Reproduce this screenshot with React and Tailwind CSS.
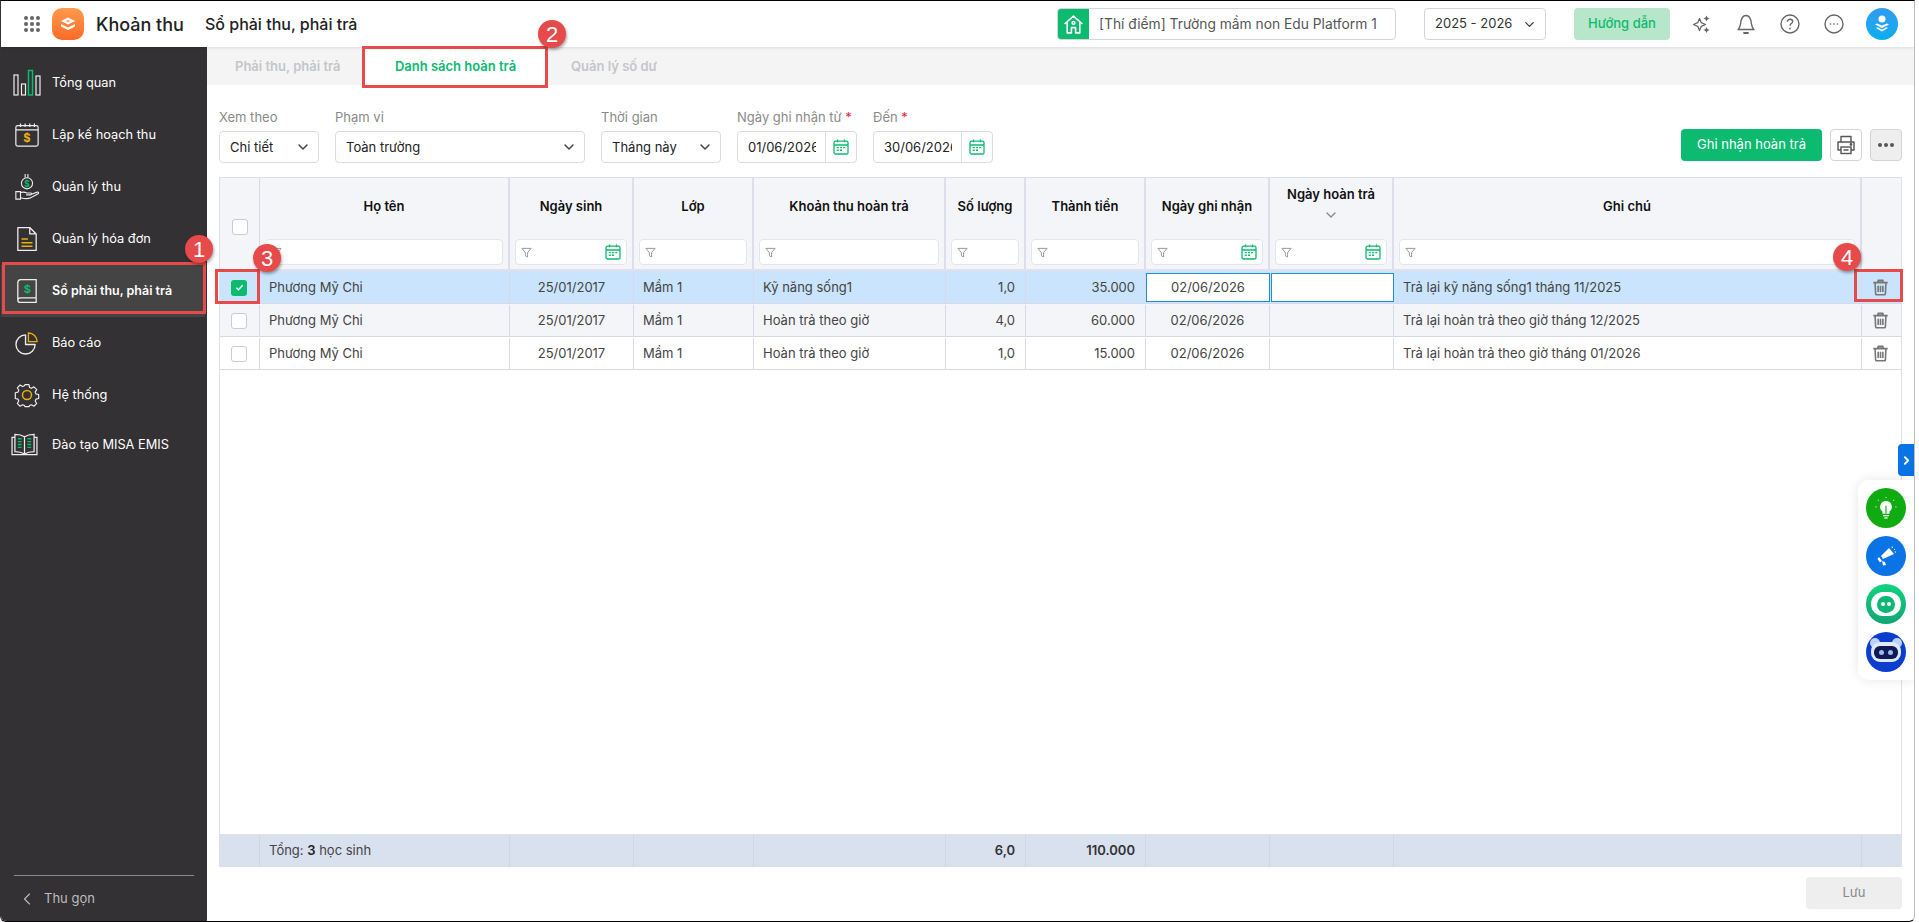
// App.jsx
import { ChevronDown, ChevronLeft, ChevronRight } from "lucide-react";

const GREEN = "#0cbb6f";
const GOLD = "#e9b10d";

/* ===========================
   SMALL ICONS
=========================== */

function Calendar() {
  return (
    <svg viewBox="0 0 16 16" className="w-[16px] h-[16px]" fill="none" stroke={GREEN} strokeWidth="1.3">
      <rect x="1" y="2.2" width="14" height="12.8" rx="1.6" />
      <path d="M1 6h14M4.500 .6v2.600M11.500 .6v2.600" />
      <path d="M3.800 8.600h2M7 8.600h2M10.200 8.600h2M3.800 11.200h2M7 11.200h2" strokeWidth="1.400" />
    </svg>
  );
}

function Funnel() {
  return (
    <svg viewBox="0 0 12 12" className="w-[11px] h-[11px] shrink-0" fill="none" stroke="#8b8f98" strokeWidth="1">
      <path d="M1 1.500h10L7.200 6.200v4.600L4.800 9.600V6.200z" strokeLinejoin="round" />
    </svg>
  );
}

function Trash() {
  return (
    <svg viewBox="0 0 16 16" className="w-[17px] h-[17px]" fill="none" stroke="#777" strokeWidth="1.500">
      <path d="M1.200 3.400h13.600M5.400 3.200l.6-1.800h4l.6 1.800" strokeWidth="1.700" />
      <path d="M2.900 3.600l.5 10.200c0 .6.500 1 1 1h7.200c.5 0 1-.4 1-1l.5-10.200" />
      <path d="M5.800 6.400v5.800M8 6.400v5.800M10.200 6.400v5.800" />
    </svg>
  );
}

function Checkbox({ checked }) {
  if (checked) {
    return (
      <div className="w-4 h-4 rounded-[3px] bg-[#0cbb6f] flex items-center justify-center">
        <svg viewBox="0 0 10 10" className="w-[9px] h-[9px]" fill="none" stroke="#fff" strokeWidth="1.600">
          <path d="M1.500 5.200l2.400 2.300 4.600-5" />
        </svg>
      </div>
    );
  }
  return <div className="w-4 h-4 rounded-[3px] bg-white border border-[#c9ccd3]" />;
}

function Badge({ n, className }) {
  return (
    <div
      className={`absolute z-20 w-[28px] h-[28px] rounded-full bg-[#e64a4a] text-white text-[22px] flex items-center justify-center shadow-[1px_2px_3px_rgba(0,0,0,0.35)] font-['Liberation_Sans',sans-serif] ${className}`}
    >
      {n}
    </div>
  );
}

/* ===========================
   SIDEBAR ICONS
=========================== */

const sideIcons = {
  overview: (
    <svg viewBox="0 0 28 28" className="w-[28px] h-[28px]" fill="none" stroke="#eee" strokeWidth="1.200">
      <rect x="1" y="6" width="4" height="20" />
      <rect x="8.500" y="15" width="4" height="11" />
      <rect x="15.500" y="1.500" width="4" height="24.500" stroke={GREEN} strokeWidth="1.500" />
      <rect x="23" y="7" width="4" height="19" />
    </svg>
  ),
  plan: (
    <svg viewBox="0 0 28 28" className="w-[26px] h-[26px]" fill="none" stroke="#eee" strokeWidth="1.300">
      <rect x="2" y="4" width="24" height="22" rx="2" />
      <path d="M2 8.500h24M7 1.500v4M12 1.500v4M17 1.500v4M22 1.500v4" />
      <text x="14" y="22" textAnchor="middle" fontSize="12" fontWeight="700" fill={GOLD} stroke="none" fontFamily="Inter, sans-serif">$</text>
    </svg>
  ),
  collect: (
    <svg viewBox="0 0 28 30" className="w-[26px] h-[28px]" fill="none" stroke="#eee" strokeWidth="1.200">
      <path d="M12 1v4M15 1v4" />
      <circle cx="14" cy="11" r="6" />
      <text x="14" y="14.500" textAnchor="middle" fontSize="9" fontWeight="700" fill={GREEN} stroke="none" fontFamily="Inter, sans-serif">$</text>
      <path d="M2 20h5v8H2zM7 21c3-1 5-.5 7 .5h4c1.400 0 1.400 2-.4 2H13M18 23l7-2.500c1.400-.3 2 1 1 1.800L17 27c-3 1-6 .5-10-.5" />
    </svg>
  ),
  invoice: (
    <svg viewBox="0 0 24 28" className="w-[22px] h-[26px]" fill="none" stroke="#eee" strokeWidth="1.400">
      <path d="M2 1.500h13l7 7v18H2zM15 1.500v7h7" strokeLinejoin="round" />
      <path d="M6 14h7M6 18h12M6 22h12" stroke={GOLD} strokeWidth="1.600" />
    </svg>
  ),
  book: (
    <svg viewBox="0 0 24 28" className="w-[22px] h-[26px]" fill="none" stroke="#eee" strokeWidth="1.400">
      <path d="M5 1.500h17v20H5c-2 0-3 1-3 2.500V5c0-2 1-3.500 3-3.500zM2 24c0 1.500 1 2.500 3 2.500h17v-5" />
      <text x="12.500" y="16" textAnchor="middle" fontSize="12" fontWeight="700" fill={GREEN} stroke="none" fontFamily="Inter, sans-serif">$</text>
    </svg>
  ),
  report: (
    <svg viewBox="0 0 24 24" className="w-[23px] h-[23px]" fill="none" stroke="#eee" strokeWidth="1.400">
      <path d="M11 3a10 10 0 1 0 10 10H11z" strokeLinejoin="round" />
      <path d="M14 1a9 9 0 0 1 9 9h-9z" stroke={GOLD} fill="none" />
    </svg>
  ),
  system: (
    <svg viewBox="0 0 26 26" className="w-[26px] h-[26px]" fill="none" stroke="#eee" strokeWidth="1.300">
      <path
        d="M10.800 1.500h4.400l.7 3.200 2 .9 2.800-1.700 3.100 3.100-1.700 2.800.9 2 3 .7v4.400l-3 .7-.9 2 1.700 2.800-3.100 3.100-2.800-1.700-2 .9-.7 1.300h-4.400l-.7-1.300-2-.9-2.800 1.700-3.100-3.100 1.700-2.800-.9-2-3-.7V10.500l3-.7.9-2-1.700-2.800 3.100-3.100 2.800 1.700 2-.9z"
        strokeLinejoin="round"
        transform="translate(1.300 1.300) scale(.9)"
      />
      <circle cx="13" cy="13" r="4.500" stroke={GOLD} strokeWidth="1.500" />
    </svg>
  ),
  training: (
    <svg viewBox="0 0 28 24" className="w-[27px] h-[23px] mr-[4px]" fill="none" stroke="#eee" strokeWidth="1.300">
      <path d="M14 4C11 2 8 1.500 4 1.500v18c4 0 7 .5 10 2.500 3-2 6-2.500 10-2.500v-18c-4 0-7 .5-10 2.500zM14 4v18" />
      <path d="M4 4.500H1v18h26v-18h-3" />
      <path d="M7 6h4M7 9h4M7 12h4M7 15h4M17 6h4M17 9h4M17 12h4M17 15h4" stroke={GREEN} strokeWidth="1.500" />
    </svg>
  ),
};

const menu = [
  { key: "overview", label: "Tổng quan" },
  { key: "plan", label: "Lập kế hoạch thu" },
  { key: "collect", label: "Quản lý thu" },
  { key: "invoice", label: "Quản lý hóa đơn" },
  { key: "book", label: "Sổ phải thu, phải trả", active: true },
  { key: "report", label: "Báo cáo" },
  { key: "system", label: "Hệ thống" },
  { key: "training", label: "Đào tạo MISA EMIS", short: true },
];

/* ===========================
   TABLE DATA
=========================== */

const GRID =
  "grid grid-cols-[40px_250px_124px_120px_192px_80px_120px_124px_124px_468px_40px]";

const columns = [
  { title: "Họ tên" },
  { title: "Ngày sinh", date: true },
  { title: "Lớp" },
  { title: "Khoản thu hoàn trả" },
  { title: "Số lượng" },
  { title: "Thành tiền" },
  { title: "Ngày ghi nhận", date: true },
  { title: "Ngày hoàn trả", date: true, sort: true },
  { title: "Ghi chú" },
];

const rows = [
  { item: "Kỹ năng sống1", qty: "1,0", amount: "35.000", note: "Trả lại kỹ năng sống1 tháng 11/2025", bg: "bg-[#c9e4fc]", selected: true },
  { item: "Hoàn trả theo giờ", qty: "4,0", amount: "60.000", note: "Trả lại hoàn trả theo giờ tháng 12/2025", bg: "bg-[#f4f5f9]" },
  { item: "Hoàn trả theo giờ", qty: "1,0", amount: "15.000", note: "Trả lại hoàn trả theo giờ tháng 01/2026", bg: "bg-white" },
];

function Select({ label, value, width }) {
  return (
    <div className={width}>
      <div className="text-[13px] leading-[18px] text-[#8a8a8a] -mt-[1px] mb-[5px]">{label}</div>
      <div className="h-8 rounded-[4px] border border-[#dcdcdf] bg-white flex items-center justify-between pl-[10px] pr-[7px] text-[13px] text-[#222]">
        <span className="pt-[1px]">{value}</span>
        <ChevronDown size={16} color="#444" strokeWidth={2.2} />
      </div>
    </div>
  );
}

function DateInput({ label, value }) {
  return (
    <div className="w-[120px]">
      <div className="text-[13px] leading-[18px] text-[#8a8a8a] -mt-[1px] mb-[5px]">
        {label} <span className="text-[#f01f3a]">*</span>
      </div>
      <div className="h-8 rounded-[4px] border border-[#dcdcdf] bg-white flex items-center text-[13px] text-[#222]">
        <div className="w-[68px] ml-[10px] overflow-hidden whitespace-nowrap pt-[1px]">{value}</div>
        <div className="ml-auto w-[31px] h-full border-l border-[#dcdcdf] flex items-center justify-center">
          <Calendar />
        </div>
      </div>
    </div>
  );
}

/* ===========================
   MAIN
=========================== */

export default function App() {
  return (
    <div className="w-[1915px] h-[922px] bg-white border-t border-b border-l border-r border-t-black border-b-black border-l-[#333] border-r-[#bbb] rounded-br-[6px] rounded-bl-[6px] overflow-hidden flex flex-col relative font-['Inter',sans-serif]">
      {/* HEADER */}
      <header className="h-[46px] shrink-0 flex items-center bg-white relative z-10 shadow-[0_1px_3px_rgba(0,0,0,0.1)]">
        <div className="ml-[23px] w-[16px] grid grid-cols-3 gap-[2px]">
          {[...Array(9)].map((_, i) => (
            <span key={i} className="w-[4px] h-[4px] rounded-full bg-[#666]" />
          ))}
        </div>
        <div className="ml-[12px] w-[32px] h-[32px] rounded-[10px] bg-gradient-to-b from-[#ff9a4d] to-[#fb6a26] flex items-center justify-center">
          <svg viewBox="0 0 16 16" className="w-[16px] h-[16px]">
            <path d="M8 1.500l7 3.500-7 3.500L1 5z" fill="#fff" />
            <path d="M1 8l7 3.500L15 8v2.500L8 14l-7-3.500z" fill="#fff" />
            <path d="M5.500 5l2.500-1 2.500 1-2.500 1z" fill="#fb9a66" />
          </svg>
        </div>
        <div className="ml-[12px] w-[109px] text-[18px] font-medium text-[#222] whitespace-nowrap">Khoản thu</div>
        <div className="text-[16px] font-medium text-[#222] whitespace-nowrap">Sổ phải thu, phải trả</div>

        <div className="ml-auto flex items-center">
          <div className="w-[339px] h-8 rounded-[4px] border border-[#d5d5d8] flex items-center overflow-hidden">
            <div className="w-[31px] h-full bg-[#0cbb6f] flex items-center justify-center shrink-0">
              <svg viewBox="0 0 20 20" className="w-[21px] h-[21px]" fill="none" stroke="#fff" strokeWidth="1.500">
                <path d="M1.500 9.500L10 2l8.500 7.500M4 8v10h4v-5h4v5h4V8" strokeLinejoin="round" />
                <circle cx="10" cy="8.500" r="1.300" />
              </svg>
            </div>
            <span className="ml-[10px] text-[13.8px] text-[#555] whitespace-nowrap">[Thí điểm] Trường mầm non Edu Platform 1</span>
          </div>
          <div className="ml-[28px] w-[122px] h-8 rounded-[4px] border border-[#d5d5d8] flex items-center justify-between pl-[10px] pr-[8px] text-[13px] text-[#333]">
            <span>2025 - 2026</span>
            <ChevronDown size={15} color="#444" strokeWidth={2.2} />
          </div>
          <div className="ml-[28px] w-[96px] h-8 rounded-[4px] bg-[#b7e6cb] flex items-center justify-center text-[13px] font-medium text-[#0cbb6f]">
            Hướng dẫn
          </div>
          <div className="ml-[22px] w-[20px] flex justify-center">
            <svg viewBox="0 0 20 20" className="w-[20px] h-[20px]" fill="#666">
              <path d="M7.500 4.500l1.800 4.200 4.200 1.800-4.200 1.800-1.800 4.200-1.800-4.200-4.200-1.800 4.200-1.800z" fill="none" stroke="#666" strokeWidth="1.300" strokeLinejoin="round" />
              <path d="M14.500 1.500l1 2 2 1-2 1-1 2-1-2-2-1 2-1zM14.500 13l1 2 2 1-2 1-1 2-1-2-2-1 2-1z" />
            </svg>
          </div>
          <div className="ml-[24px] w-[20px] flex justify-center">
            <svg viewBox="0 0 20 22" className="w-[20px] h-[22px]" fill="none" stroke="#666" strokeWidth="1.400">
              <path d="M2 16.500c1.500-1 2-2.500 2.500-5.500C5 6 6.500 2.500 10 2.500S15 6 15.500 11c.5 3 1 4.500 2.500 5.500z" strokeLinejoin="round" />
              <path d="M8 20h4" strokeWidth="1.800" strokeLinecap="round" />
            </svg>
          </div>
          <div className="ml-[24px] w-[20px] flex justify-center">
            <svg viewBox="0 0 20 20" className="w-[20px] h-[20px]" fill="none" stroke="#666" strokeWidth="1.400">
              <circle cx="10" cy="10" r="9" />
              <path d="M7.400 7.800c0-1.600 1.200-2.600 2.700-2.600s2.600 1 2.600 2.300c0 2-2.700 2-2.700 4.200" />
              <circle cx="10" cy="14.500" r=".9" fill="#666" stroke="none" />
            </svg>
          </div>
          <div className="ml-[24px] w-[20px] flex justify-center">
            <svg viewBox="0 0 20 20" className="w-[20px] h-[20px]" fill="none" stroke="#666" strokeWidth="1.400">
              <circle cx="10" cy="10" r="9" />
              <circle cx="6.500" cy="10" r=".8" fill="#666" stroke="none" />
              <circle cx="10" cy="10" r=".8" fill="#666" stroke="none" />
              <circle cx="13.500" cy="10" r=".8" fill="#666" stroke="none" />
            </svg>
          </div>
          <div className="ml-[22px] mr-[16px] w-[32px] h-[32px] rounded-full bg-gradient-to-b from-[#2f9bf0] to-[#04aeee] flex items-center justify-center">
            <svg viewBox="0 0 20 20" className="w-[20px] h-[20px]" fill="#fff">
              <circle cx="10" cy="5" r="3.500" />
              <path d="M3 10.500l7 3.500 7-3.500-2-1-5 2-5-2zM4 14l6 3.500 6-3.500-1.500-.8L10 15.500l-4.500-2.300z" />
            </svg>
          </div>
        </div>
      </header>

      <div className="flex-1 flex min-h-0">
        {/* SIDEBAR */}
        <aside className="w-[206px] shrink-0 bg-[#333133] flex flex-col text-white pt-[10px]">
          {menu.map((m) => (
            <div
              key={m.key}
              className={`flex items-center ${m.short ? "h-[47px]" : "h-[52px]"} ${m.active ? "bg-[#444444] font-semibold text-[12.5px] mr-[2px]" : "text-[12.8px]"}`}
            >
              <div className="w-[51px] flex justify-center shrink-0">{sideIcons[m.key]}</div>
              <span className="whitespace-nowrap">{m.label}</span>
            </div>
          ))}
          <div className="mt-auto mx-[13px] border-t border-[#8a8a8a] h-[46px] flex items-center">
            <ChevronLeft size={20} color="#bbb" strokeWidth={1.300} className="ml-[3px]" />
            <span className="ml-[7px] text-[13px] text-[#bdbdbd]">Thu gọn</span>
          </div>
        </aside>

        {/* MAIN */}
        <main className="flex-1 min-w-0 flex flex-col">
          <div className="h-[38px] shrink-0 bg-[#f4f4f5] flex text-[13px] font-semibold">
            <div className="w-[157px] pl-[28px] pt-[1px] flex items-center text-[#c4c6ca] whitespace-nowrap">Phải thu, phải trả</div>
            <div className="w-[183px] bg-white pt-[2px] flex items-center justify-center text-[#0cbb6f]">Danh sách hoàn trả</div>
            <div className="pl-[24px] pt-[1px] flex items-center text-[#c4c6ca] whitespace-nowrap">Quản lý số dư</div>
          </div>

          <div className="flex-1 min-h-0 flex flex-col px-[12px] pb-[12px]">
            {/* FILTERS */}
            <div className="pt-6 flex items-end shrink-0">
              <Select label="Xem theo" value="Chi tiết" width="w-[100px]" />
              <Select label="Phạm vi" value="Toàn trường" width="w-[250px] ml-4" />
              <Select label="Thời gian" value="Tháng này" width="w-[120px] ml-4" />
              <div className="ml-4"><DateInput label="Ngày ghi nhận từ" value="01/06/2026" /></div>
              <div className="ml-4"><DateInput label="Đến" value="30/06/2026" /></div>
              <div className="ml-auto mb-[2px] flex items-center">
                <div className="w-[141px] h-8 rounded-[4px] bg-[#0cbb6f] flex items-center justify-center text-[13px] text-white">
                  Ghi nhận hoàn trả
                </div>
                <div className="ml-2 w-8 h-8 rounded-[4px] border border-[#d5d5d8] flex items-center justify-center">
                  <svg viewBox="0 0 20 20" className="w-[20px] h-[20px]" fill="none" stroke="#555" strokeWidth="1.400">
                    <path d="M5 7V1.500h10V7M5 15H2V7h16v8h-3" strokeLinejoin="round" />
                    <rect x="5" y="12" width="10" height="6.500" />
                    <path d="M7.500 15h5" />
                    <circle cx="15" cy="9.500" r=".7" fill="#555" />
                  </svg>
                </div>
                <div className="ml-2 w-8 h-8 rounded-[4px] border border-[#d5d5d8] bg-[#eeeeee] flex items-center justify-center gap-[2px]">
                  {[0, 1, 2].map((i) => (
                    <span key={i} className="w-[4px] h-[4px] rounded-full bg-[#555]" />
                  ))}
                </div>
              </div>
            </div>

            {/* TABLE */}
            <div className="mt-[14px] flex-1 min-h-0 flex flex-col border-l border-r border-t border-[#dfe1e8]">
              <div className={`${GRID} h-[93px] shrink-0 bg-[#f4f5f9] border-b-2 border-[#e0e2e8]`}>
                <div className="border-r border-[#d5d9e8] flex justify-center pt-[41px] pl-[1px]">
                  <Checkbox />
                </div>
                {columns.map((c) => (
                  <div key={c.title} className="border-r-2 border-[#dcdfeb] flex flex-col px-[5px] pb-[4px]">
                    <div className={`flex-1 flex flex-col items-center justify-center text-[13px] font-semibold text-[#111] ${c.sort ? "pb-[9px]" : "pb-[4px]"}`}>
                      <span className="whitespace-nowrap">{c.title}</span>
                      {c.sort && <ChevronDown size={16} color="#888" className="mt-[3px]" />}
                    </div>
                    <div className="h-[26px] rounded-[4px] border border-[#e4e5ea] bg-white flex items-center justify-between pl-[5px] pr-[5px]">
                      <Funnel />
                      {c.date && <Calendar />}
                    </div>
                  </div>
                ))}
                <div />
              </div>

              {rows.map((r) => (
                <div key={r.note} className={`${GRID} h-[33px] shrink-0 pt-[1px] text-[13px] text-[#444] border-b border-[#d5d9e8] ${r.bg}`}>
                  <div className="border-r border-[#d5d9e8] flex items-center justify-center pr-[1px]">
                    <Checkbox checked={r.selected} />
                  </div>
                  <div className="border-r border-[#d5d9e8] flex items-center pl-[9px]">Phương Mỹ Chi</div>
                  <div className="border-r border-[#d5d9e8] flex items-center justify-center">25/01/2017</div>
                  <div className="border-r border-[#d5d9e8] flex items-center pl-[9px]">Mầm 1</div>
                  <div className="border-r border-[#d5d9e8] flex items-center pl-[9px]">{r.item}</div>
                  <div className="border-r border-[#d5d9e8] flex items-center justify-end pr-[10px]">{r.qty}</div>
                  <div className="border-r border-[#d5d9e8] flex items-center justify-end pr-[10px]">{r.amount}</div>
                  {r.selected ? (
                    <>
                      <div className="my-[1px] border border-[#1f8fdc] bg-white flex items-center justify-center">02/06/2026</div>
                      <div className="my-[1px] ml-[1px] border border-[#1f8fdc] bg-white" />
                    </>
                  ) : (
                    <>
                      <div className="border-r border-[#d5d9e8] flex items-center justify-center">02/06/2026</div>
                      <div className="border-r border-[#d5d9e8]" />
                    </>
                  )}
                  <div className="border-r border-[#d5d9e8] flex items-center pl-[9px]">{r.note}</div>
                  <div className="flex items-center justify-center pr-[4px]">
                    <Trash />
                  </div>
                </div>
              ))}

              <div className="flex-1" />

              <div className={`${GRID} h-[33px] shrink-0 bg-[#d9e0ee] text-[13px] text-[#444] border-t border-[#dfe1e8]`}>
                <div className="border-r border-[#d0d6e4]" />
                <div className="border-r border-[#d0d6e4] flex items-center pl-[9px]">
                  <span>Tổng: <b className="font-semibold text-[#222]">3</b> học sinh</span>
                </div>
                <div className="border-r border-[#d0d6e4]" />
                <div className="border-r border-[#d0d6e4]" />
                <div className="border-r border-[#d0d6e4]" />
                <div className="border-r border-[#d0d6e4] flex items-center justify-end pr-[10px] font-semibold text-[#333]">6,0</div>
                <div className="border-r border-[#d0d6e4] flex items-center justify-end pr-[10px] font-semibold text-[#333]">110.000</div>
                <div className="border-r border-[#d0d6e4]" />
                <div className="border-r border-[#d0d6e4]" />
                <div className="border-r border-[#d0d6e4]" />
                <div />
              </div>
            </div>

            <div className="mt-[10px] flex justify-end shrink-0">
              <div className="w-[96px] h-8 rounded-[4px] bg-[#eeeeee] flex items-center justify-center text-[13px] text-[#888]">Lưu</div>
            </div>
          </div>
        </main>
      </div>

      {/* FLOATING PANEL */}
      <div className="absolute left-[1897px] top-[443px] w-[16px] h-[32px] bg-[#0a73e5] rounded-l-[4px] flex items-center justify-center z-10">
        <ChevronRight size={13} color="#fff" strokeWidth={3.500} />
      </div>
      <div className="absolute left-[1857px] top-[479px] w-[56px] h-[200px] bg-white rounded-l-[10px] shadow-[0_0_12px_rgba(0,0,0,0.1)] flex flex-col items-start gap-2 pl-2 pt-2 z-10">
        <div className="w-10 h-10 rounded-full bg-[#10ab10] flex items-center justify-center">
          <svg viewBox="0 0 24 24" className="w-[28px] h-[28px]" fill="#fff" stroke="none">
            <path d="M12 6a5 5 0 0 0-3 9v2h6v-2a5 5 0 0 0-3-9zM9.500 18h5v1h-5zM10.500 20h3v1h-3z" />
            <path d="M12 2.500v1.500M5 5l1 1M19 5l-1 1M3 11h1.500M21 11h-1.500" stroke="#bfeabf" strokeWidth="1" strokeDasharray="1 1" />
            <path d="M12 10v7" stroke="#10ab10" strokeWidth="1" />
          </svg>
        </div>
        <div className="w-10 h-10 rounded-full bg-[#0a73e5] flex items-center justify-center">
          <svg viewBox="0 0 24 24" className="w-[24px] h-[24px]" fill="#fff">
            <path d="M15 4l5 6-11 5-2-3zM5 13l3 4-2 1.500-2.500-3.500zM8 17l3 1 1 3-3 .5z" />
            <path d="M18 2.500l.5 1.500M21 5l-1 .8M22 8h-1.300" stroke="#fff" strokeWidth="1" />
          </svg>
        </div>
        <div className="w-10 h-10 rounded-full bg-gradient-to-b from-[#10d47f] to-[#12a574] flex items-center justify-center">
          <div className="w-[30px] h-[24px] rounded-full bg-white flex items-center justify-center">
            <div className="w-[18px] h-[17px] rounded-full bg-[#0fb777] flex items-center justify-center gap-[2px]">
              <span className="w-[4px] h-[4px] rounded-full bg-white" />
              <span className="w-[4px] h-[4px] rounded-full bg-white" />
            </div>
          </div>
        </div>
        <div className="w-10 h-10 rounded-full bg-[#0b3dcf] flex items-center justify-center relative overflow-hidden">
          <span className="absolute left-[4px] top-[6px] w-[10px] h-[10px] rounded-full bg-[#bcd3f5]" />
          <span className="absolute right-[4px] top-[6px] w-[10px] h-[10px] rounded-full bg-[#bcd3f5]" />
          <div className="relative w-[30px] h-[20px] rounded-[9px] bg-[#dfe9f8] flex items-center justify-center">
            <div className="w-[24px] h-[13px] rounded-[6px] bg-[#0e1a55] flex items-center justify-center gap-[4px]">
              <span className="w-[5px] h-[5px] rounded-full bg-[#9fb8e8]" />
              <span className="w-[5px] h-[5px] rounded-full bg-[#9fb8e8]" />
            </div>
          </div>
        </div>
      </div>

      {/* ANNOTATIONS */}
      <div className="absolute z-20 left-[1px] top-[261px] w-[204px] h-[52px] border-[3px] border-[#e64a4a]" />
      <div className="absolute z-20 left-[361px] top-[45px] w-[186px] h-[42px] border-[3px] border-[#e64a4a]" />
      <div className="absolute z-20 left-[214px] top-[268px] w-[45px] h-[35px] border-[3px] border-[#e64a4a]" />
      <div className="absolute z-20 left-[1853px] top-[268px] w-[49px] h-[33px] border-[3px] border-[#e64a4a]" />
      <Badge n={1} className="left-[184px] top-[234px]" />
      <Badge n={2} className="left-[537px] top-[19px]" />
      <Badge n={3} className="left-[252px] top-[243px]" />
      <Badge n={4} className="left-[1832px] top-[242px]" />
    </div>
  );
}
